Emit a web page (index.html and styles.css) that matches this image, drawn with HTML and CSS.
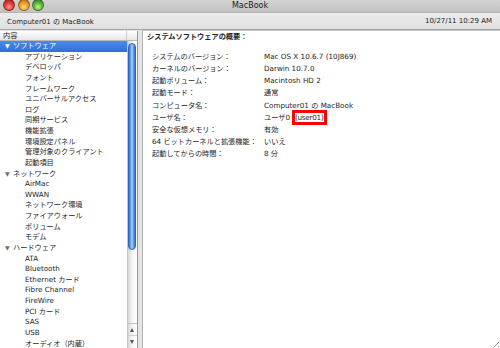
FILE: index.html
```html
<!DOCTYPE html>
<html lang="ja">
<head>
<meta charset="utf-8">
<title>MacBook</title>
<link rel="stylesheet" href="styles.css">
</head>
<body>
<div class="window">
  <div class="titlebar">
    <div class="lights">
      <span class="light red"></span>
      <span class="light yellow"></span>
      <span class="light green"></span>
    </div>
    <div class="title">MacBook</div>
    <div></div>
  </div>
  <div class="pathbar">
    <span>Computer01 の MacBook</span>
    <span>10/27/11 10:29 AM</span>
  </div>
  <div class="main">
    <div class="sidebar">
      <div class="colhead">内容</div>
      <div class="colcorner"></div>
      <div class="list">
        <div class="row parent selected"><span class="tri">▼</span>ソフトウェア</div>
        <div class="row child">アプリケーション</div>
        <div class="row child">デベロッパ</div>
        <div class="row child">フォント</div>
        <div class="row child">フレームワーク</div>
        <div class="row child">ユニバーサルアクセス</div>
        <div class="row child">ログ</div>
        <div class="row child">同期サービス</div>
        <div class="row child">機能拡張</div>
        <div class="row child">環境設定パネル</div>
        <div class="row child">管理対象のクライアント</div>
        <div class="row child">起動項目</div>
        <div class="row parent"><span class="tri">▼</span>ネットワーク</div>
        <div class="row child">AirMac</div>
        <div class="row child">WWAN</div>
        <div class="row child">ネットワーク環境</div>
        <div class="row child">ファイアウォール</div>
        <div class="row child">ボリューム</div>
        <div class="row child">モデム</div>
        <div class="row parent"><span class="tri">▼</span>ハードウェア</div>
        <div class="row child">ATA</div>
        <div class="row child">Bluetooth</div>
        <div class="row child">Ethernet カード</div>
        <div class="row child">Fibre Channel</div>
        <div class="row child">FireWire</div>
        <div class="row child">PCI カード</div>
        <div class="row child">SAS</div>
        <div class="row child">USB</div>
        <div class="row child">オーディオ（内蔵）</div>
      </div>
      <div class="scrollbar">
        <div class="thumb"></div>
        <div class="arrows">
          <div class="arrow up"></div>
          <div class="arrow down"></div>
        </div>
      </div>
    </div>
    <div class="content">
      <div class="heading">システムソフトウェアの概要：</div>
      <div class="props">
        <div class="label">システムのバージョン：</div><div class="value">Mac OS X 10.6.7 (10J869)</div>
        <div class="label">カーネルのバージョン：</div><div class="value">Darwin 10.7.0</div>
        <div class="label">起動ボリューム：</div><div class="value">Macintosh HD 2</div>
        <div class="label">起動モード：</div><div class="value">通常</div>
        <div class="label">コンピュータ名：</div><div class="value">Computer01 の MacBook</div>
        <div class="label">ユーザ名：</div><div class="value">ユーザ0<span class="mark">(user01)</span></div>
        <div class="label">安全な仮想メモリ：</div><div class="value">有効</div>
        <div class="label">64 ビットカーネルと拡張機能：</div><div class="value">いいえ</div>
        <div class="label">起動してからの時間：</div><div class="value">8 分</div>
      </div>
      <div class="grip"></div>
    </div>
  </div>
</div>
</body>
</html>
```

FILE: styles.css
```css
* { box-sizing: border-box; }

html, body {
  margin: 0;
  padding: 0;
}

body {
  width: 500px;
  height: 348px;
  overflow: hidden;
  font-family: "DejaVu Sans", "Noto Sans CJK JP", sans-serif;
  font-size: 7.2px;
  color: #1e1e1e;
  background: #e4e4e4;
}

.window {
  display: flex;
  flex-direction: column;
  height: 348px;
}

.titlebar {
  height: 13px;
  display: grid;
  grid-template-columns: 1fr auto 1fr;
  align-items: center;
  background: linear-gradient(#d2d2d2, #c3c3c3);
  border-bottom: 1px solid #b4b4b4;
  overflow: hidden;
}

.lights {
  display: flex;
  gap: 2.5px;
  padding-left: 3px;
  margin-top: -2px;
}

.light {
  width: 12px;
  height: 12px;
  border-radius: 50%;
  border: 1px solid rgba(0, 0, 0, 0.28);
}

.light.red { background: radial-gradient(circle at 50% 70%, #ff9a8c 0%, #e0443a 45%, #a31c14 100%); }
.light.yellow { background: radial-gradient(circle at 50% 70%, #ffe08a 0%, #eea12a 45%, #b2650c 100%); }
.light.green { background: radial-gradient(circle at 50% 70%, #c6f59a 0%, #63b83e 45%, #2f7a1c 100%); }

.title {
  font-size: 8px;
  color: #222;
  margin-top: -2px;
}

.pathbar {
  height: 17px;
  display: flex;
  align-items: center;
  justify-content: space-between;
  padding: 0 8px 0 7px;
  background: linear-gradient(#ececec, #e0e0e0);
  border-bottom: 1px solid #a6a6a6;
  font-size: 7px;
}

.main {
  flex: 1;
  display: flex;
  min-height: 0;
}

.sidebar {
  width: 138px;
  margin-top: 1px;
  display: grid;
  grid-template-columns: 127px 10px;
  grid-template-rows: 10px 1fr;
  border-right: 1px solid #6f9fe2;
  background: #fff;
  overflow: hidden;
}

.colhead {
  padding-left: 3px;
  line-height: 9px;
  background: linear-gradient(#ffffff, #e6e6e6);
  border-bottom: 1px solid #b8b8b8;
  border-right: 1px solid #c8c8c8;
}

.colcorner {
  background: linear-gradient(#ffffff, #e6e6e6);
  border-bottom: 1px solid #b8b8b8;
}

.list {
  overflow: hidden;
}

.row {
  height: 10.64px;
  line-height: 10.64px;
  white-space: nowrap;
}

.row.child { padding-left: 25px; }
.row.parent { padding-left: 5px; }

.tri {
  display: inline-block;
  width: 8px;
  font-size: 6px;
  color: #707070;
}

.row.selected {
  background: linear-gradient(#4b8ce6, #2e6fd7);
  color: #fff;
}

.row.selected .tri { color: #fff; }

.scrollbar {
  display: flex;
  flex-direction: column;
  background: linear-gradient(to right, #d6d6d6, #f4f4f4 45%, #ffffff);
  border-left: 1px solid #c4c4c4;
}

.thumb {
  margin: 2px 0 0 0;
  width: 8px;
  height: 207px;
  border-radius: 4px;
  border: 1px solid #2f66bd;
  background: linear-gradient(to right, #2e6fcf, #7db6f3 35%, #a9d2fa 50%, #5c9ef0 75%, #2f70cf);
}

.arrows {
  margin-top: auto;
  border-top: 1px solid #c4c4c4;
}

.arrow {
  height: 12px;
  position: relative;
}

.arrow.up { border-bottom: 1px solid #d0d0d0; }

.arrow::after {
  content: "";
  position: absolute;
  left: 2px;
  top: 4px;
  border-left: 2.5px solid transparent;
  border-right: 2.5px solid transparent;
}

.arrow.up::after { border-bottom: 4px solid #555; }
.arrow.down::after { border-top: 4px solid #555; }

.content {
  flex: 1;
  margin-left: 4px;
  position: relative;
  background: #fff;
  border-left: 1px solid #b4b4b4;
  border-top: 1px solid #c4c4c4;
  padding: 1px 0 0 4px;
}

.heading {
  font-weight: bold;
  line-height: 9px;
}

.props {
  margin-top: 10px;
  padding-left: 5px;
  display: grid;
  grid-template-columns: 112px auto;
  line-height: 12.15px;
}

.label, .value { white-space: nowrap; }

.mark {
  display: inline-block;
  vertical-align: middle;
  margin: -3px 0 -3px 1.5px;
  border: 3px solid #ff0000;
  padding: 0 0.5px;
  line-height: 9px;
  letter-spacing: -0.25px;
  background: #fff;
}

.grip {
  position: absolute;
  right: 1px;
  bottom: 1px;
  width: 8px;
  height: 8px;
  background: repeating-linear-gradient(135deg, transparent 0 1.5px, #9a9a9a 1.5px 2.3px, #ffffff 2.3px 3px);
  clip-path: polygon(100% 0, 100% 100%, 0 100%);
}
```
